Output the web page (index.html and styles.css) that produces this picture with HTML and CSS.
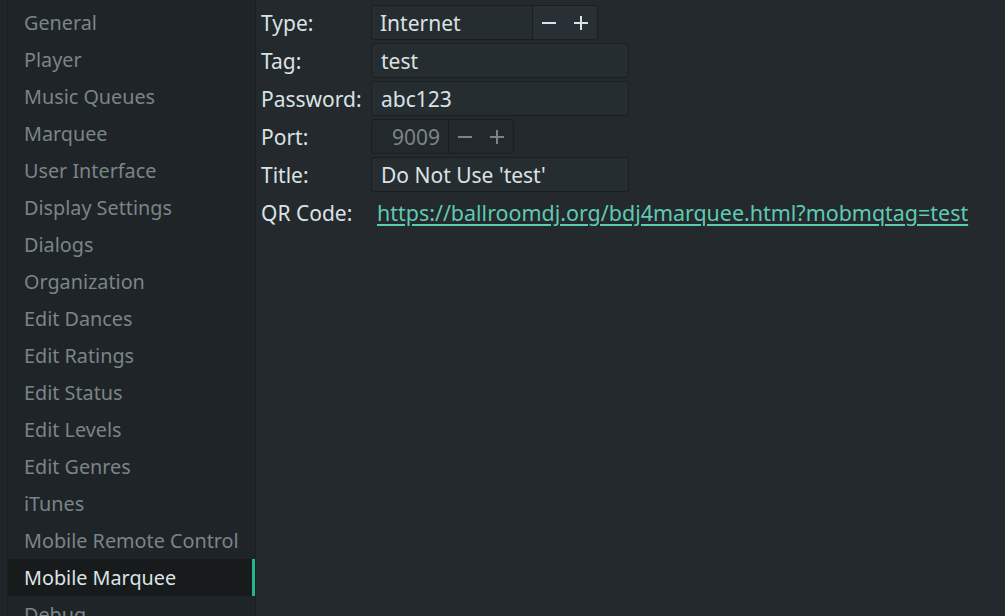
FILE: index.html
```html
<!DOCTYPE html>
<html>
<head>
<meta charset="utf-8">
<link rel="stylesheet" href="styles.css">
</head>
<body>
<div class="app">
  <div class="edge"></div>
  <nav class="sidebar">
    <div class="item">General</div>
    <div class="item">Player</div>
    <div class="item">Music Queues</div>
    <div class="item">Marquee</div>
    <div class="item">User Interface</div>
    <div class="item">Display Settings</div>
    <div class="item">Dialogs</div>
    <div class="item">Organization</div>
    <div class="item">Edit Dances</div>
    <div class="item">Edit Ratings</div>
    <div class="item">Edit Status</div>
    <div class="item">Edit Levels</div>
    <div class="item">Edit Genres</div>
    <div class="item">iTunes</div>
    <div class="item">Mobile Remote Control</div>
    <div class="item selected">Mobile Marquee</div>
    <div class="item">Debug</div>
  </nav>
  <main class="content">
    <div class="row">
      <span class="label">Type:</span>
      <div class="spin">
        <span class="spin-text">Internet</span>
        <span class="spin-btns">
          <span class="btn"><svg width="14" height="14" viewBox="0 0 14 14"><path d="M0 7h14" stroke="currentColor" stroke-width="2"/></svg></span>
          <span class="btn"><svg width="14" height="14" viewBox="0 0 14 14"><path d="M0 7h14M7 0v14" stroke="currentColor" stroke-width="2"/></svg></span>
        </span>
      </div>
    </div>
    <div class="row">
      <span class="label">Tag:</span>
      <div class="entry">test</div>
    </div>
    <div class="row">
      <span class="label">Password:</span>
      <div class="entry">abc123</div>
    </div>
    <div class="row">
      <span class="label">Port:</span>
      <div class="spin disabled">
        <span class="spin-num">9009</span>
        <span class="spin-btns">
          <span class="btn"><svg width="14" height="14" viewBox="0 0 14 14"><path d="M0 7h14" stroke="currentColor" stroke-width="2"/></svg></span>
          <span class="btn"><svg width="14" height="14" viewBox="0 0 14 14"><path d="M0 7h14M7 0v14" stroke="currentColor" stroke-width="2"/></svg></span>
        </span>
      </div>
    </div>
    <div class="row">
      <span class="label">Title:</span>
      <div class="entry">Do Not Use 'test'</div>
    </div>
    <div class="row">
      <span class="label">QR Code:</span>
      <a class="link" href="#">https://ballroomdj.org/bdj4marquee.html?mobmqtag=test</a>
    </div>
  </main>
</div>
</body>
</html>
```
FILE: styles.css
```css
html, body {
  margin: 0;
  padding: 0;
  height: 100%;
  overflow: hidden;
  background: #23292c;
  font-family: "Noto Sans", "Open Sans", sans-serif;
}
.app {
  display: flex;
  height: 616px;
}
.edge {
  width: 7px;
  background: #1f2528;
  border-right: 1px solid #191e20;
}
.sidebar {
  width: 247px;
  background: #1e2427;
  border-right: 1px solid #191e20;
  padding-top: 4px;
  overflow: hidden;
  display: flex;
  flex-direction: column;
  font-size: 19.8px;
}
.item {
  height: 37px;
  flex: none;
  display: flex;
  align-items: center;
  padding-left: 16px;
  color: #7b8588;
  box-sizing: border-box;
}
.item.selected {
  background: #171b1c;
  color: #dde4e6;
  border-right: 3px solid #25b390;
}
.content {
  flex: 1;
  padding: 5px 0 0 5px;
  display: flex;
  flex-direction: column;
  gap: 3px;
  color: #dbe2e4;
  font-size: 21px;
}
.row {
  display: flex;
  align-items: center;
  height: 35px;
}
.label {
  width: 110px;
  flex: none;
}
.entry, .spin {
  height: 35px;
  box-sizing: border-box;
  border: 1px solid #1a1f22;
  border-radius: 3px;
  background: #262d31;
  display: flex;
  align-items: center;
}
.entry {
  width: 258px;
  padding-left: 9px;
}
.spin {
  width: 227px;
}
.spin-text {
  width: 160px;
  padding-left: 8px;
  box-sizing: border-box;
}
.spin-btns {
  display: flex;
  height: 100%;
  border-left: 1px solid #1a1f22;
  background: #283036;
  border-radius: 0 3px 3px 0;
  color: #dbe2e4;
}
.btn {
  width: 32px;
  display: flex;
  align-items: center;
  justify-content: center;
}
.spin.disabled {
  width: 143px;
  background: #22282b;
  color: #7b8588;
}
.spin.disabled .spin-btns {
  background: #22282b;
  color: #7b8588;
}
.spin-num {
  width: 77px;
  text-align: right;
  padding-right: 8px;
  box-sizing: border-box;
}
.link {
  color: #5fcab3;
  text-decoration: underline;
  text-underline-offset: 3px;
  margin-left: 6px;
  font-size: 21.45px;
}
```
